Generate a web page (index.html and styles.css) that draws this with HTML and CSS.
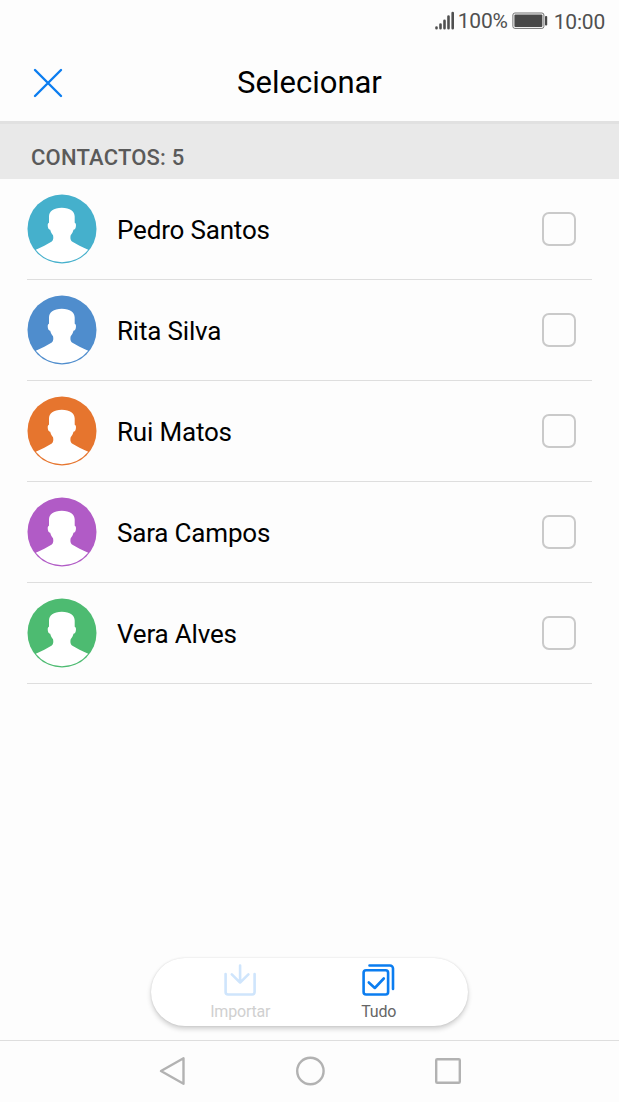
FILE: index.html
```html
<!DOCTYPE html>
<html lang="pt">
<head>
  <meta charset="UTF-8" />
  <meta name="viewport" content="width=device-width, initial-scale=1.0"/>
  <title>Selecionar</title>
  <link rel="stylesheet" href="styles.css">
</head>
<body>

  <!-- Shared avatar silhouette -->
  <svg class="defs" width="0" height="0">
    <symbol id="person" viewBox="0 0 70 70">
      <circle cx="35" cy="35" r="34.5" fill="currentColor" />
      <path fill="#fff" d="M34.800 13.700C26.500 13.700 22 17.300 22 22.500V28.800C20.700 29.200 20.500 31 20.900 32.900C21.300 34.700 22 35.600 23.200 35.700C23.700 38 24.700 39.600 26 41.200C26.600 43.600 26.300 46 24.800 47.600C20.500 50.500 14.500 53 8.800 55.800A33.700 33.700 0 0 0 61.200 55.800C55.500 53 49.300 50.500 45 47.600C43.400 46 43.100 43.600 43.700 41.200C45 39.600 46 38 46.500 35.700C47.700 35.600 48.400 34.700 48.800 32.900C49.200 31 49 29.200 47.700 28.800V22.500C47.700 17.300 43.200 13.700 34.800 13.700z" />
    </symbol>
  </svg>

  <div class="status-bar">
    <svg class="signal" width="20" height="20" viewBox="0 0 20 20">
      <path d="M1.500 17.500v.7M5.500 14.500v3.700M9.500 10.800v7.400M13.500 6.500v11.700M17.700 3v15.200" />
    </svg>
    <span class="percent">100%</span>
    <svg class="battery" width="36" height="18" viewBox="0 0 36 18">
      <rect class="case" x=".9" y="1" width="31" height="15.400" rx="2" />
      <rect class="level" x="2.400" y="2.500" width="28" height="12.400" rx="1" />
      <rect class="level" x="33" y="4" width="2.200" height="9.500" rx=".8" />
    </svg>
    <span class="time">10:00</span>
  </div>

  <header>
    <button class="close" aria-label="Fechar">
      <svg width="30" height="30" viewBox="0 0 30 30">
        <path d="M2 2l26 26M28 2L2 28" />
      </svg>
    </button>
    <h1>Selecionar</h1>
  </header>

  <h2>CONTACTOS: 5</h2>

  <ul class="contacts">
    <li>
      <svg class="avatar teal"><use href="#person" /></svg>
      <span class="name">Pedro Santos</span>
      <span class="checkbox"></span>
    </li>
    <li>
      <svg class="avatar blue"><use href="#person" /></svg>
      <span class="name">Rita Silva</span>
      <span class="checkbox"></span>
    </li>
    <li>
      <svg class="avatar orange"><use href="#person" /></svg>
      <span class="name">Rui Matos</span>
      <span class="checkbox"></span>
    </li>
    <li>
      <svg class="avatar purple"><use href="#person" /></svg>
      <span class="name">Sara Campos</span>
      <span class="checkbox"></span>
    </li>
    <li>
      <svg class="avatar green"><use href="#person" /></svg>
      <span class="name">Vera Alves</span>
      <span class="checkbox"></span>
    </li>
  </ul>

  <div class="actions">
    <button class="action disabled">
      <svg width="34" height="34" viewBox="0 0 34 34">
        <path d="M2.600 11V29a2.500 2.500 0 0 0 2.500 2.500h24a2.500 2.500 0 0 0 2.500-2.500V11M17.100 2.500v17M8.800 11.400l8.300 8.300 8.300-8.300" />
      </svg>
      <span>Importar</span>
    </button>
    <button class="action">
      <svg width="34" height="34" viewBox="0 0 34 34">
        <rect x="1.600" y="7.300" width="24.500" height="24.200" rx="2.500" />
        <path d="M7.500 2.500h20.500a3 3 0 0 1 3 3V26M6.800 19.500l6 5.500 9-9.500" />
      </svg>
      <span>Tudo</span>
    </button>
  </div>

  <!-- System navigation -->
  <nav>
    <svg width="30" height="30" viewBox="0 0 30 30"><path d="M26.500 2.300v25.400L4 15z" /></svg>
    <svg width="30" height="30" viewBox="0 0 30 30"><circle cx="15.400" cy="15" r="13.200" /></svg>
    <svg width="30" height="30" viewBox="0 0 30 30"><rect x="3.200" y="3.200" width="23.600" height="23.600" rx="1" /></svg>
  </nav>

</body>
</html>
```
FILE: styles.css
```css
* { box-sizing: border-box; margin: 0; padding: 0; }

body {
  font-family: Roboto, sans-serif;
  background: #fdfdfd;
  color: #000;
  height: 1102px;
  display: flex;
  flex-direction: column;
  overflow: hidden;
}

svg { display: block; fill: none; flex: none; }
button { background: none; border: none; font-family: inherit; cursor: pointer; }

.defs { height: 0; }

.status-bar {
  height: 42px;
  padding: 0 14px 0 0;
  display: flex;
  justify-content: flex-end;
  align-items: center;
  font-size: 21px;
  letter-spacing: -0.2px;
  color: #505050;
}

.signal { stroke: #505050; stroke-width: 2.6; stroke-linecap: round; margin: 0 3px 2px 0; }
.battery { margin: 0 6px 1px 4px; }
.battery .case { stroke: #707070; stroke-width: 1; }
.battery .level { fill: #484848; }
.percent { padding-bottom: 1px; }
.time { padding-top: 2px; }

header {
  height: 79px;
  padding-top: 2px;
  display: grid;
  grid-template-columns: 96px 1fr 96px;
  align-items: center;
}

.close { display: flex; justify-content: center; }
.close svg { stroke: #0b7df0; stroke-width: 2.4; stroke-linecap: round; }

h1 { font-size: 31px; font-weight: 400; text-align: center; }

h2 {
  height: 58px;
  padding: 9px 31px 0;
  border-top: 3px solid #e1e1e1;
  background: #e9e9e9;
  color: #5a5a5a;
  font-size: 22px;
  font-weight: 500;
  letter-spacing: 0.2px;
  line-height: 50px;
}

.contacts { list-style: none; padding: 0 27px; flex: 1; }

.contacts li {
  height: 101px;
  display: flex;
  align-items: center;
  border-bottom: 1px solid #dedede;
}

.avatar { width: 70px; height: 70px; margin-right: 20px; }
.teal { color: #45b0cc; }
.blue { color: #4f8dcd; }
.orange { color: #e6752e; }
.purple { color: #b15bc6; }
.green { color: #4dbb71; }

.name { flex: 1; padding-top: 2px; font-size: 26px; letter-spacing: -0.18px; }

.checkbox {
  width: 34px;
  height: 34px;
  margin: 0 16px 0 0;
  border: 2px solid #cacaca;
  border-radius: 7px;
}

.actions {
  width: 317px;
  height: 68px;
  margin: 0 auto 14px;
  padding: 0 20px;
  display: flex;
  background: #fff;
  border-radius: 34px;
  box-shadow: 0 3px 5px rgba(0,0,0,0.18), 0 0 2px rgba(0,0,0,0.12);
}

.action {
  flex: 1;
  padding-top: 5px;
  display: flex;
  flex-direction: column;
  align-items: center;
  font-size: 16px;
  line-height: 30px;
  letter-spacing: -0.2px;
  color: #666;
}

.action svg { stroke: #0b7df0; stroke-width: 2.6; stroke-linecap: round; stroke-linejoin: round; }
.action.disabled { color: #d0d0d0; }
.action.disabled svg { stroke: #cfe5fc; }

nav {
  height: 62px;
  padding-bottom: 2px;
  border-top: 1px solid #dedede;
  display: flex;
  justify-content: center;
  align-items: center;
  gap: 108px;
}

nav svg { stroke: #b2b2b2; stroke-width: 2.4; stroke-linejoin: round; }
```
